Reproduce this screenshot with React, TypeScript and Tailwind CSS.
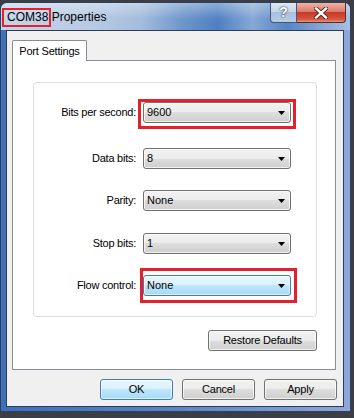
import React from "react";

const font = { fontFamily: '"Liberation Sans", Arial, sans-serif' };

const btnFace =
  "bg-[linear-gradient(#f2f2f2_0%,#ebebeb_50%,#dddddd_50%,#cfcfcf_100%)] border border-[#707070] rounded-[3px] shadow-[inset_0_0_0_1px_rgba(255,255,255,0.7)]";
const hotFace =
  "bg-[linear-gradient(#eaf6fd_0%,#d9f0fc_50%,#bee6fd_50%,#a7d9f5_100%)] border border-[#3c7fb1] rounded-[3px] shadow-[inset_0_0_0_1px_rgba(255,255,255,0.6)]";

const Arrow = () => (
  <svg width="7" height="4" viewBox="0 0 7 4" className="shrink-0">
    <path d="M0 0h7L3.5 4z" fill="#000" />
  </svg>
);

interface ComboProps {
  value: string;
  hot?: boolean;
  mark?: "bits" | "flow";
}

const Combo = ({ value, hot, mark }: ComboProps) => (
  <div className="relative">
    <div
      className={`h-[21px] w-[148px] flex items-center justify-between pl-[3px] pr-[5px] text-[11px] text-black ${
        hot ? hotFace : btnFace
      }`}
    >
      <span>{value}</span>
      <Arrow />
    </div>
    {mark === "bits" && (
      <div className="absolute -left-[5px] -right-[5px] -top-[3px] -bottom-[6px] border-[3px] border-[#e3202c]" />
    )}
    {mark === "flow" && (
      <div className="absolute -left-[3px] -right-[6px] -top-[7px] -bottom-[7px] border-[3px] border-[#e3202c]" />
    )}
  </div>
);

const Row = ({ label, children }: { label: string; children: React.ReactNode }) => (
  <div className="flex items-center h-[21px]">
    <div className="w-[103px] text-right text-[11px] tracking-[-0.25px] text-black pr-[1px]">{label}</div>
    <div className="ml-[6px]">{children}</div>
  </div>
);

const Button = ({ label, def, w = "w-[73px]" }: { label: string; def?: boolean; w?: string }) => (
  <div
    className={`${w} h-[21px] flex items-center justify-center text-[11px] tracking-[-0.2px] text-black ${
      def ? hotFace : btnFace
    }`}
  >
    {label}
  </div>
);

export default function App() {
  return (
    <div className="w-[354px] h-[418px] bg-[#3b3e44] overflow-hidden" style={font}>
      <div className="mt-[2px] w-[351px] h-[410px] flex flex-col rounded-t-[7px] border border-[#2f3f5c] bg-[linear-gradient(90deg,#3f6fb8_0%,#5a86c6_50%,#8ea6d8_100%)]">
        {/* title bar */}
        <div className="h-[27px] shrink-0 flex items-start justify-between rounded-t-[6px] bg-[linear-gradient(90deg,#c4d4e8_0%,#b8cbe3_25%,#a4bddd_40%,#6f96cb_52%,#4f80c2_62%,#86a8d6_72%,#5585c5_82%,#7ea0d2_90%,#a8bfe0_100%)] relative">
          <div className="absolute inset-0 rounded-t-[6px] bg-[linear-gradient(rgba(255,255,255,0.35),rgba(255,255,255,0)_60%)]" />
          <div className="relative mt-[7px] ml-[6px] text-[12px] leading-[14px] text-black">
            <span className="relative">
              COM38
              <span className="absolute -left-[5px] -right-[3px] -top-[2px] -bottom-[3px] border-2 border-[#e3202c]" />
            </span>{" "}
            Properties
          </div>
          <div className="relative flex mr-[4px]">
            <div className="w-[27px] h-[20px] flex items-center justify-center rounded-bl-[4px] border border-[#44577a] border-t-0 bg-[linear-gradient(#dfe8f3_0%,#c6d5e8_45%,#a9bfdc_50%,#b9cde6_100%)]">
              <span className="text-[14px] font-bold text-white [text-shadow:0_0_2px_#223355,0_0_1px_#223355]">?</span>
            </div>
            <div className="w-[49px] h-[20px] flex items-center justify-center rounded-br-[4px] border border-[#5a2a26] border-t-0 border-l-0 bg-[linear-gradient(#eeb3a6_0%,#dd7a6a_45%,#c8392a_50%,#d4553d_85%,#e8947a_100%)]">
              <svg width="14" height="12" viewBox="0 0 14 12">
                <path d="M2 1.5l10 9M12 1.5l-10 9" stroke="#4a1d18" strokeWidth="4.2" strokeLinecap="square" />
                <path d="M2 1.5l10 9M12 1.5l-10 9" stroke="#fff" strokeWidth="2.4" strokeLinecap="square" />
              </svg>
            </div>
          </div>
        </div>

        {/* client area */}
        <div className="flex-1 ml-[5px] mr-[6px] mb-[4px] bg-[#f0f0f0] border border-[#2c3b57] flex flex-col">
          <div className="ml-[5px] mt-[9px] flex">
            <div className="w-[75px] h-[21px] -mb-[1px] relative z-10 bg-white border border-[#898c95] border-b-0 rounded-t-[2px] flex items-center justify-center text-[11px] tracking-[-0.2px] text-black">
              Port Settings
            </div>
          </div>
          <div className="ml-[5px] w-[324px] h-[310px] bg-white border border-[#898c95] pl-[20px] pt-[21px]">
            <div className="w-[284px] h-[235px] border border-[#d9dfe4] rounded-[4px] pt-[19px] flex flex-col">
              <Row label="Bits per second:">
                <Combo value="9600" mark="bits" />
              </Row>
              <div className="h-[25px]" />
              <Row label="Data bits:">
                <Combo value="8" />
              </Row>
              <div className="h-[21px]" />
              <Row label="Parity:">
                <Combo value="None" />
              </Row>
              <div className="h-[22px]" />
              <Row label="Stop bits:">
                <Combo value="1" />
              </Row>
              <div className="h-[21px]" />
              <Row label="Flow control:">
                <Combo value="None" hot mark="flow" />
              </Row>
            </div>
            <div className="w-[284px] mt-[13px] flex justify-end">
              <Button label="Restore Defaults" w="w-[109px]" />
            </div>
          </div>
          <div className="mt-[9px] mr-[6px] flex justify-end gap-[9px]">
            <Button label="OK" def />
            <Button label="Cancel" />
            <Button label="Apply" />
          </div>
        </div>
      </div>
    </div>
  );
}
